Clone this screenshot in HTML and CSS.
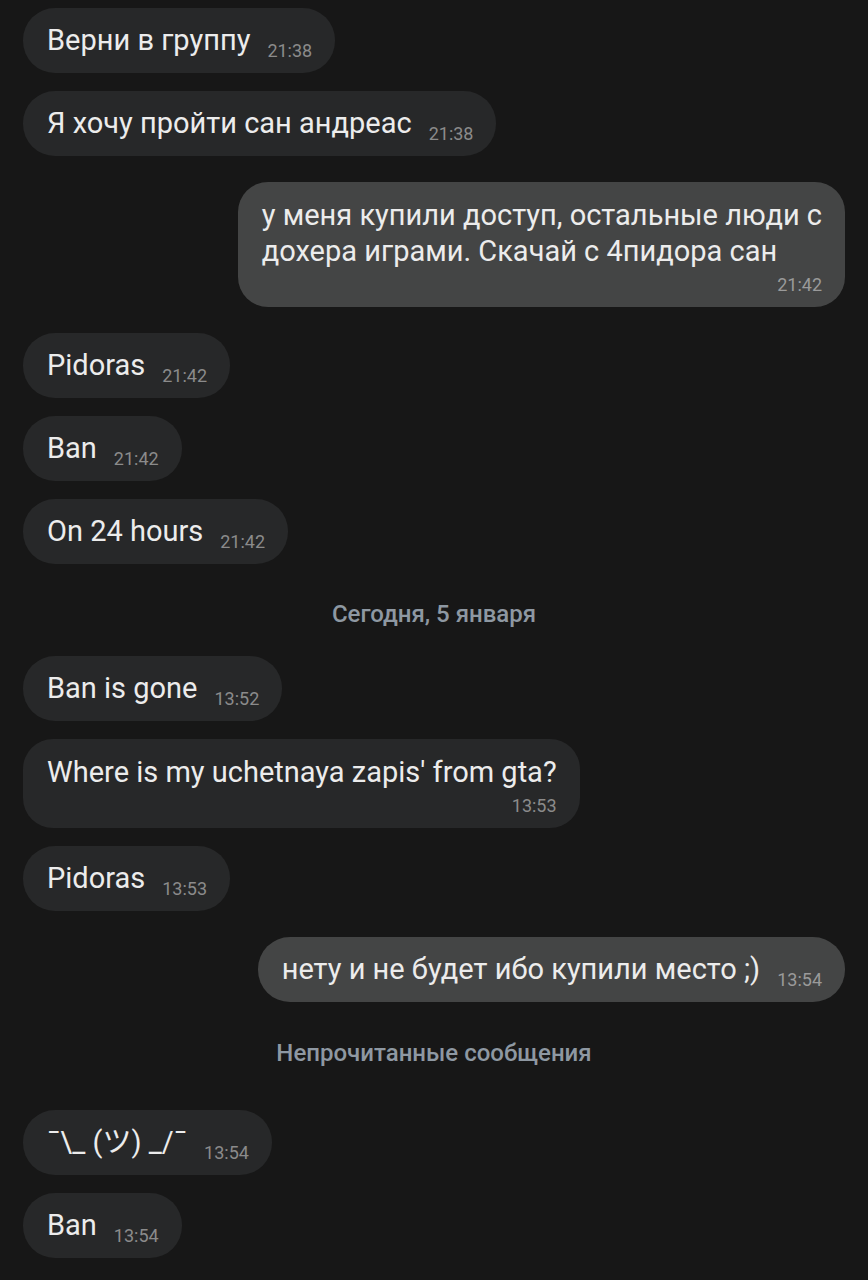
FILE: index.html
```html
<!DOCTYPE html>
<html>

<head>
    <title>Чат</title>
    <link rel="stylesheet" href="styles.css">
</head>

<body>
    <div class="chat">
        <div class="msg in">Верни в группу<span class="time">21:38</span></div>
        <div class="msg in">Я хочу пройти сан андреас<span class="time">21:38</span></div>

        <div class="msg out multi group">у меня купили доступ, остальные люди с<br>дохера играми. Скачай с 4пидора сан<span class="time">21:42</span></div>

        <div class="msg in group">Pidoras<span class="time">21:42</span></div>
        <div class="msg in">Ban<span class="time">21:42</span></div>
        <div class="msg in">On 24 hours<span class="time">21:42</span></div>

        <div class="divider date">Сегодня, 5 января</div>

        <div class="msg in first">Ban is gone<span class="time">13:52</span></div>
        <div class="msg in multi">Where is my uchetnaya zapis' from gta?<span class="time">13:53</span></div>
        <div class="msg in">Pidoras<span class="time">13:53</span></div>

        <div class="msg out group">нету и не будет ибо купили место ;)<span class="time">13:54</span></div>

        <div class="divider unread">Непрочитанные сообщения</div>

        <div class="msg in first">¯\_ (ツ) _/¯<span class="time">13:54</span></div>
        <div class="msg in">Ban<span class="time">13:54</span></div>
    </div>
</body>
</html>
```

FILE: styles.css
```css
body {
    background-color: #171717;
    font-family: Roboto, "Noto Sans CJK JP", sans-serif;
    margin: 0;
    height: 1280px;
    overflow: hidden;
}

.chat {
    display: flex;
    flex-direction: column;
    padding: 8px 23px 0 23px;
}

.msg {
    align-self: flex-start;
    background-color: #272829;
    color: #ececec;
    font-size: 29px;
    line-height: 36px;
    padding: 14px 23px 15px 24px;
    border-radius: 32px;
    margin-top: 18px;
    white-space: nowrap;
}

.msg:first-child {
    margin-top: 0;
}

.msg.group {
    margin-top: 26px;
}

.msg.first {
    margin-top: 0;
}

.msg.out {
    align-self: flex-end;
    background-color: #444545;
}

.time {
    color: #8b8b8b;
    font-size: 18px;
    line-height: 0;
    margin-left: 17px;
    vertical-align: -7px;
}

.msg.out .time {
    color: #9a9a9a;
}

.msg.multi {
    padding: 15px 23px 10px 24px;
    border-radius: 30px;
}

.msg.multi .time {
    display: block;
    text-align: right;
    line-height: 24px;
    margin-top: 4px;
    margin-left: 0;
    vertical-align: baseline;
}

.divider {
    text-align: center;
    color: #8e98a2;
    font-size: 24px;
    font-weight: 500;
    line-height: 28px;
}

.divider.date {
    padding: 36px 0 28px 0;
}

.divider.unread {
    padding: 37px 0 43px 0;
}
```
